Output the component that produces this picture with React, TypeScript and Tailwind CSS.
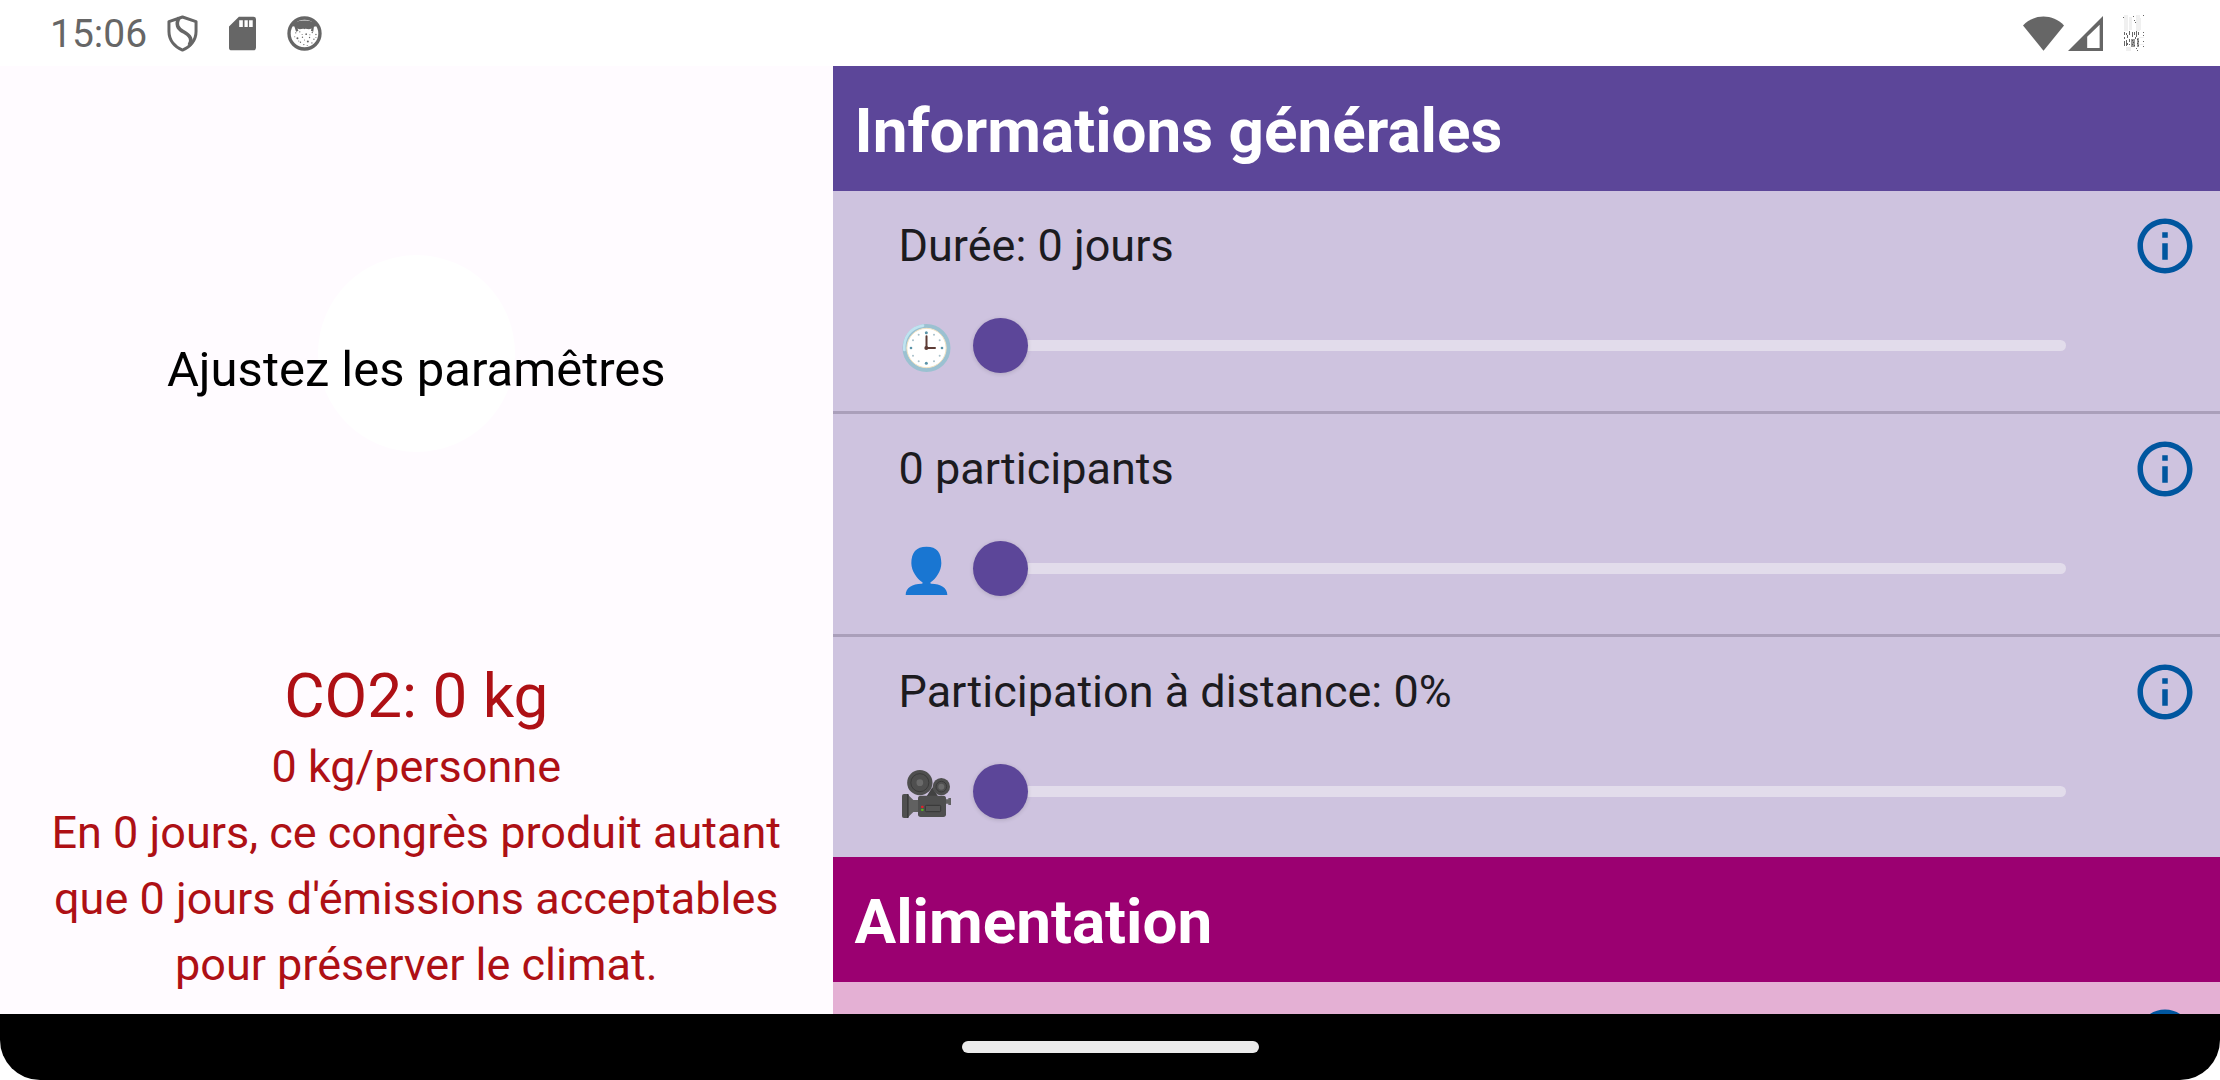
import { useId, useState } from "react";
import type { ReactNode } from "react";
import { MdOutlineInfo } from "react-icons/md";

function ShieldIcon() {
  return (
    <svg viewBox="0 0 92 112" className="h-[37px] w-[31px]" fill="none" stroke="#666" strokeWidth="9" aria-hidden="true">
      <path d="M46 6 L87 20 V50 C87 76 70 97 46 106 C22 97 5 76 5 50 V20 Z" strokeLinejoin="round" />
      <path d="M36 8 C24 28 32 42 48 50 C70 62 78 76 66 92" strokeWidth="11" />
    </svg>
  );
}

function SdCardIcon() {
  return (
    <svg viewBox="0 0 82 104" className="h-[35px] w-[27px]" aria-hidden="true">
      <path
        fill="#666"
        fillRule="evenodd"
        d="M30 1 H74 Q82 1 82 9 V95 Q82 103 74 103 H8 Q0 103 0 95 V31 Z M31 12 V32 H42 V12 Z M47 12 V32 H57 V12 Z M61 12 V32 H72 V12 Z"
      />
    </svg>
  );
}

function FaceIcon() {
  const dots = [
    [26, 50, 2], [38, 47, 2], [57, 54, 2.5], [75, 49, 2], [86, 55, 2], [31, 66, 3], [46, 63, 2],
    [67, 64, 2], [80, 69, 2], [23, 62, 1.5], [40, 78, 2], [52, 71, 1.5], [62, 76, 3], [74, 80, 2],
    [50, 85, 2], [60, 88, 1.5], [35, 74, 1.5], [86, 64, 1.5], [68, 56, 1.5], [45, 55, 1.5],
  ];
  return (
    <svg viewBox="0 0 104 104" className="size-[35px]" aria-hidden="true">
      <circle cx="52" cy="52" r="46" fill="none" stroke="#666" strokeWidth="10" />
      <path
        fill="#666"
        d="M12 30 C24 8 80 8 92 30 L80 32 L78 47 L71 44 L73 37 C63 42 58 36 52 39 C44 36 40 42 31 37 L34 44 L27 47 L22 31 Z"
      />
      {dots.map(([x, y, r]) => (
        <circle key={`${x}-${y}`} cx={x} cy={y} r={r} fill="#666" />
      ))}
    </svg>
  );
}

function WifiIcon() {
  return (
    <svg viewBox="0 0 122 104" className="h-[35px] w-[41px]" aria-hidden="true">
      <path fill="#666" d="M0 28 C34 -7 88 -7 122 28 L61 103 Z" />
    </svg>
  );
}

function SignalIcon() {
  return (
    <svg viewBox="0 0 104 104" className="size-[35px]" aria-hidden="true">
      <path fill="#666" fillRule="evenodd" d="M0 104 L104 0 V104 Z M57 62 V95 H94 V26 Z" />
    </svg>
  );
}

function BatteryIcon() {
  return (
    <svg viewBox="0 0 21 36" className="h-9 w-[21px]" shapeRendering="crispEdges" aria-hidden="true">
      <path fill="#f0f0f0" d="M1 0h4v16H1z M6 2h3v13H6z M13 0h4v16h-4z M3 32h5v4H3z M16 22h5v1h-5z M16 29h5v1h-5z M17 3h1v12h-1z" />
      <path
        fill="#666"
        d="M1 17h1v3H1z M1 22h1v2H1z M1 26h1v5H1z M3 18h1v2H3z M3 25h1v6H3z M4 20h1v3H4z M4 28h1v2H4z M6 16h1v4H6z M6 24h1v3H6z M6 29h1v1H6z M9 17h1v5H9z M11 17h1v3h-1z M8 25h1v3H8z M13 16h1v6h-1z M15 17h1v3h-1z M12 22h1v2h-1z M20 17h1v1h-1z M20 20h1v1h-1z M20 26h1v1h-1z M20 31h1v1h-1z M0 2h1v1H0z M11 5h1v1h-1z M12 7h1v1h-1z M20 0h1v1h-1z M10 1h1v1h-1z M14 35h1v1h-1z M13 33h1v1h-1z"
      />
      <path fill="#999" d="M8 24h4v8H8z M14 23h2v9h-2z" />
      <path fill="#555" d="M9 25h1v1H9z M10 27h1v1h-1z M9 29h1v1H9z M11 30h1v1h-1z M14 24h1v1h-1z M15 26h1v1h-1z M14 28h1v1h-1z M15 30h1v1h-1z" />
    </svg>
  );
}

function ClockEmoji() {
  const ticks = [
    [116, 104], [162, 104], [179, 121], [179, 167], [162, 184], [116, 184], [99, 167], [99, 121],
  ];
  return (
    <svg viewBox="57 63 165 165" className="mt-1.5 size-[55px] shrink-0" aria-hidden="true">
      <circle cx="139.500" cy="144" r="72" fill="#9bc1d1" />
      <circle cx="139.500" cy="144" r="59" fill="#fff" stroke="#f3e3c3" strokeWidth="3" />
      <path d="M73 150 C70 112 90 84 129 77" fill="none" stroke="#bfe3f0" strokeWidth="8" strokeLinecap="round" />
      {ticks.map(([x, y]) => (
        <circle key={`${x}-${y}`} cx={x} cy={y} r="3" fill="#a9c0ca" />
      ))}
      <g fill="#5a93a8">
        <circle cx="139" cy="98" r="4.500" />
        <circle cx="139" cy="190" r="4.500" />
        <circle cx="93" cy="144" r="4" />
        <circle cx="186" cy="144" r="4" />
      </g>
      <path d="M139.500 109 V144 H165" fill="none" stroke="#5d3b35" strokeWidth="6" strokeLinecap="round" />
      <circle cx="139" cy="144" r="6" fill="#5d3b35" />
    </svg>
  );
}

function PersonEmoji() {
  return (
    <svg viewBox="57 132 165 165" className="mt-1.5 size-[55px] shrink-0" aria-hidden="true">
      <path
        fill="#1976d2"
        d="M139.500 140 C171 140 184 158 184 190 C184 212 168 238 152 247 C150 249 151 251 154 251 C182 252 202 262 202 285 H77 C77 262 97 252 125 251 C128 251 129 249 127 247 C111 238 94 212 94 190 C94 158 108 140 139.500 140 Z"
      />
    </svg>
  );
}

function CameraEmoji() {
  return (
    <svg viewBox="57 141 165 165" className="mt-1.5 size-[55px] shrink-0" aria-hidden="true">
      <path fill="#424242" d="M140 229 L157 202 L174 229 Z" />
      <circle cx="119.500" cy="188" r="38" fill="#4f4f4f" />
      <circle cx="119.500" cy="188" r="27" fill="none" stroke="#3a3a3a" strokeWidth="3" />
      <circle cx="119.500" cy="188" r="10" fill="#6a6a6a" />
      <circle cx="184" cy="200" r="26" fill="#4f4f4f" />
      <circle cx="184" cy="200" r="16" fill="none" stroke="#3a3a3a" strokeWidth="3" />
      <circle cx="184" cy="200" r="9" fill="#6a6a6a" />
      <path fill="#616161" d="M84 224 L100 240 H116 V276 H100 L84 292 Z" />
      <rect x="66" y="222" width="21" height="72" rx="6" fill="#4f4f4f" />
      <path fill="#3a3a3a" d="M81 222h4v72h-4z" />
      <path fill="#616161" d="M196 238h9v-4h8v21h-8v-4h-9z" />
      <rect x="114" y="227" width="84" height="64" rx="8" fill="#4f4f4f" />
      <rect x="136" y="256" width="46" height="19" rx="3" fill="#565656" stroke="#363636" strokeWidth="3" />
      <rect x="123" y="257" width="8" height="7" rx="3" fill="#e0202a" />
      <rect x="123" y="266" width="8" height="7" rx="3" fill="#58b520" />
    </svg>
  );
}

function InfoButton({ label }: { label: string }) {
  return (
    <button type="button" aria-label={label} className="shrink-0 text-[#00569f]">
      <MdOutlineInfo className="size-[66px]" />
    </button>
  );
}

type SliderRowProps = {
  icon: ReactNode;
  format: (value: number) => string;
  info: string;
  max: number;
};

function SliderRow({ icon, format, info, max }: SliderRowProps) {
  const id = useId();
  const [value, setValue] = useState(0);
  return (
    <li className="pt-[22px] pb-[33px]">
      <div className="flex items-center justify-between pr-[22px] pl-[66px]">
        <label htmlFor={id} className="text-[45px] leading-[66px] text-[#1c1b1f]">
          {format(value)}
        </label>
        <InfoButton label={info} />
      </div>
      <div className="mt-[33px] flex h-[66px] items-center gap-[19px] pr-[154px] pl-[66px]">
        {icon}
        <input
          id={id}
          type="range"
          min={0}
          max={max}
          value={value}
          onChange={(e) => setValue(Number(e.target.value))}
          className="h-[55px] min-w-0 flex-1 cursor-pointer appearance-none bg-transparent [&::-webkit-slider-runnable-track]:h-[11px] [&::-webkit-slider-runnable-track]:rounded-full [&::-webkit-slider-runnable-track]:bg-[#e2dceb] [&::-webkit-slider-thumb]:-mt-[22px] [&::-webkit-slider-thumb]:size-[55px] [&::-webkit-slider-thumb]:appearance-none [&::-webkit-slider-thumb]:rounded-full [&::-webkit-slider-thumb]:bg-[#5c4699] [&::-webkit-slider-thumb]:shadow-[0_1px_4px_rgba(0,0,0,0.15)]"
        />
      </div>
    </li>
  );
}

export default function App() {
  return (
    <div className="flex h-screen flex-col overflow-hidden bg-white font-['Roboto',sans-serif]">
      <header className="flex h-[66px] shrink-0 items-center justify-between pr-[76px] pl-[50px]">
        <div className="flex items-center">
          <time className="pt-0.5 text-[39px] leading-[64px] text-[#666]">15:06</time>
          <div className="ml-5 flex items-center gap-[31px]">
            <ShieldIcon />
            <SdCardIcon />
            <FaceIcon />
          </div>
        </div>
        <div className="flex items-center">
          <WifiIcon />
          <div className="mr-5 ml-1">
            <SignalIcon />
          </div>
          <BatteryIcon />
        </div>
      </header>

      <main className="flex min-h-0 flex-1">
        <section className="flex w-3/8 flex-col bg-[#fffbff] pb-4 text-center">
          <div className="grid flex-1 place-items-center content-center pb-4">
            <div className="col-start-1 row-start-1 size-[197px] rounded-full bg-white" />
            <p className="z-10 col-start-1 row-start-1 pt-8 text-[49px] leading-[64px] text-black">
              Ajustez les paramêtres
            </p>
          </div>
          <div className="px-8 text-[45px] leading-[66px] text-[#ae1015]">
            <p className="text-[62px] leading-[77px]">CO2: 0 kg</p>
            <p>0 kg/personne</p>
            <p>En 0 jours, ce congrès produit autant que 0 jours d'émissions acceptables pour préserver le climat.</p>
          </div>
        </section>

        <div className="flex-1 overflow-hidden">
          <section>
            <h2 className="bg-[#5c4699] px-[22px] pt-[26px] pb-[22px] text-[62px] leading-[77px] font-bold text-white">
              Informations générales
            </h2>
            <ul className="divide-y-3 divide-[#aa9fba] bg-[#cec3df]">
              <SliderRow icon={<ClockEmoji />} format={(v) => `Durée: ${v} jours`} info="Aide sur la durée" max={14} />
              <SliderRow icon={<PersonEmoji />} format={(v) => `${v} participants`} info="Aide sur les participants" max={1000} />
              <SliderRow
                icon={<CameraEmoji />}
                format={(v) => `Participation à distance: ${v}%`}
                info="Aide sur la participation à distance"
                max={100}
              />
            </ul>
          </section>
          <section>
            <h2 className="bg-[#9b0071] px-[22px] pt-[26px] pb-[22px] text-[62px] leading-[77px] font-bold text-white">
              Alimentation
            </h2>
            <div className="flex justify-end bg-[#e4b0d4] px-[22px] py-[22px]">
              <InfoButton label="Aide sur l'alimentation" />
            </div>
          </section>
        </div>
      </main>

      <footer className="flex h-[66px] shrink-0 items-center justify-center rounded-b-[40px] bg-black">
        <button type="button" aria-label="Accueil" className="h-3 w-[297px] rounded-full bg-[#ebebeb]" />
      </footer>
    </div>
  );
}
